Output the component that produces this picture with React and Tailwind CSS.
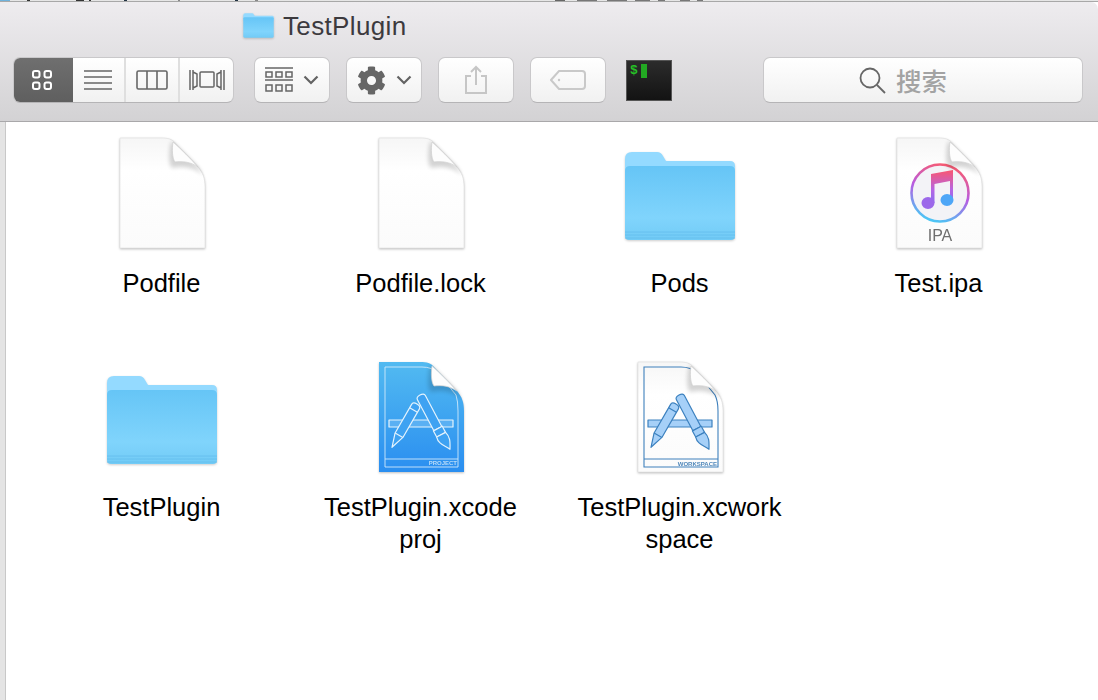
import React from "react";
import { FaCog } from "react-icons/fa";

const sans = "font-['Liberation_Sans',Arial,sans-serif]";
const cjk = "font-['Noto_Sans_CJK_SC','Noto_Sans',sans-serif]";

const PAGE = "M7 3 H48 C55 3 59 4 62 8 L85 32 C90 38 92 43 92 52 V113 H7 Z";
const FOLD = "M60 7 C59 14 59 23 62 27 C70 26 78 27 85 32 C78 24 68 14 60 7 Z";

function PageFold() {
  return (
    <>
      <path d="M58 7 C56 16 55 29 59 33 C70 31 80 32 90 40 L85 32 L60 7 Z" fill="#000" opacity="0.16" className="blur-[2px]" />
      <path d={FOLD} fill="#fdfdfd" stroke="#cfcfcf" strokeWidth="0.7" />
    </>
  );
}

function DocIcon({ children }) {
  return (
    <svg width="100" height="120" viewBox="-1 0 100 120" className="drop-shadow-[0_1px_1px_rgba(0,0,0,0.25)]">
      <defs>
        <linearGradient id="paper" x1="0" y1="0" x2="0" y2="1">
          <stop offset="0" stopColor="#f6f6f6" />
          <stop offset="0.3" stopColor="#ffffff" />
          <stop offset="1" stopColor="#fbfbfb" />
        </linearGradient>
      </defs>
      <path d={PAGE} fill="url(#paper)" stroke="#dedede" strokeWidth="0.6" />
      {children}
      <PageFold />
    </svg>
  );
}

function FolderIcon({ small }) {
  return (
    <svg
      width={small ? 31 : 120}
      height={small ? 25 : 100}
      viewBox={small ? "5 4 112 90" : "1 -2 120 100"}
      className="drop-shadow-[0_1px_1px_rgba(0,0,0,0.2)]"
    >
      <defs>
        <linearGradient id="folderFront" x1="0" y1="0" x2="0" y2="1">
          <stop offset="0" stopColor="#66c5f6" />
          <stop offset="0.7" stopColor="#80d4fc" />
          <stop offset="1" stopColor="#72cbf6" />
        </linearGradient>
      </defs>
      <path d="M6 12 Q6 5 13 5 H38 Q42 5 44 9 L47 14 H111 Q116 14 116 19 V32 H6 Z" fill="#94daff" />
      <path d="M6 24 Q6 19 11 19 H111 Q116 19 116 24 V89 Q116 93 112 93 H10 Q6 93 6 89 Z" fill="url(#folderFront)" />
      {!small && <path d="M6 85 H116 M6 88 H116 M6 91 H116" stroke="#62bdec" strokeWidth="0.8" />}
    </svg>
  );
}

// the Xcode "A" made of a pencil, a brush and a ruler
function XcodeGlyph({ line, fill, barFill }) {
  return (
    <g stroke={line} strokeWidth="1.2" strokeLinejoin="round">
      <rect x="17" y="61" width="64" height="7" fill={barFill} />
      <g transform="translate(45 45) rotate(30)" fill={fill}>
        <path d="M-4.5 3 Q-4.5 0 0 0 Q4.5 0 4.5 3 V36 L0 50 L-4.5 36 Z" />
        <path d="M-4.5 7 H4.5 M-4.5 36 H4.5" fill="none" />
      </g>
      <g transform="translate(48 36) rotate(-28)" fill={fill}>
        <path d="M-4.5 3 Q-4.5 0 0 0 Q4.5 0 4.5 3 V38 H-4.5 Z" />
        <rect x="-5" y="38" width="10" height="7" />
        <path d="M-5 45 C-7 52 -2 56 1 62 C5 55 7 51 5 45 Z" />
      </g>
    </g>
  );
}

function ItunesIcon() {
  return (
    <DocIcon>
      <defs>
        <linearGradient id="ring" x1="0.7" y1="0" x2="0.4" y2="1">
          <stop offset="0" stopColor="#fb5b6c" />
          <stop offset="0.5" stopColor="#b75ce2" />
          <stop offset="1" stopColor="#4cc6f5" />
        </linearGradient>
        <linearGradient id="note" x1="0" y1="0" x2="0" y2="1">
          <stop offset="0" stopColor="#fa5670" />
          <stop offset="0.6" stopColor="#b565e4" />
          <stop offset="1" stopColor="#8a6cf0" />
        </linearGradient>
      </defs>
      <circle cx="50" cy="58" r="28.5" fill="#f3f3f7" stroke="url(#ring)" strokeWidth="2.6" />
      <path
        d="M41 39 L63 35 V65 H60 V46 L44.5 49 V68 H41 Z"
        fill="url(#note)"
      />
      <ellipse cx="38" cy="68" rx="6.5" ry="6" fill="#9c68ea" />
      <ellipse cx="57" cy="65" rx="6.5" ry="6" fill="#4ea6f7" />
      <text x="50" y="106" textAnchor="middle" fontSize="16" fill="#6f6f6f" className={sans}>IPA</text>
    </DocIcon>
  );
}

function ProjectIcon() {
  return (
    <svg width="100" height="120" viewBox="-1 0 100 120" className="drop-shadow-[0_1px_1px_rgba(0,0,0,0.25)]">
      <defs>
        <linearGradient id="projectBg" x1="0" y1="0" x2="0" y2="1">
          <stop offset="0" stopColor="#52baf1" />
          <stop offset="1" stopColor="#2a8ef0" />
        </linearGradient>
      </defs>
      <path d={PAGE} fill="url(#projectBg)" />
      <path d="M13 8 H50 Q60 8 66 14 L84 36 Q86 42 86 52 V108 H13 Z M13 100 H86" fill="none" stroke="#cfe9fb" strokeWidth="0.9" />
      <XcodeGlyph line="#e4f3fd" fill="#3ea2f2" barFill="#5ab0f3" />
      <text x="85" y="106" textAnchor="end" fontSize="6" fontWeight="700" fill="#b9dcf8" className={sans}>PROJECT</text>
      <PageFold />
    </svg>
  );
}

function WorkspaceIcon() {
  return (
    <DocIcon>
      <path d="M13 8 H50 Q60 8 66 14 L84 36 Q87 42 87 52 V108 H13 Z M13 100 H87" fill="none" stroke="#3f80bc" strokeWidth="1.1" />
      <XcodeGlyph line="#3c81bf" fill="#a6d0f8" barFill="#a6d0f8" />
      <text x="86" y="106.5" textAnchor="end" fontSize="6" fontWeight="700" fill="#4f87ba" className={sans}>WORKSPACE</text>
    </DocIcon>
  );
}

const files = [
  { name: "Podfile", icon: <DocIcon /> },
  { name: "Podfile.lock", icon: <DocIcon /> },
  { name: "Pods", icon: <FolderIcon /> },
  { name: "Test.ipa", icon: <ItunesIcon /> },
  { name: "TestPlugin", icon: <FolderIcon /> },
  { name: "TestPlugin.xcode", more: "proj", icon: <ProjectIcon /> },
  { name: "TestPlugin.xcwork", more: "space", icon: <WorkspaceIcon /> },
];

function ToolButton({ className = "", children }) {
  return (
    <div className={`flex h-[46px] items-center justify-center rounded-[7px] border border-[#c9c8ca] border-b-[#b5b4b6] bg-gradient-to-b from-white to-[#f1f1f1] ${className}`}>
      {children}
    </div>
  );
}

function Chevron() {
  return (
    <svg width="16" height="10" viewBox="0 0 16 10" fill="none" stroke="#636363" strokeWidth="2.2">
      <path d="M1.5 1.5 L8 8 L14.5 1.5" />
    </svg>
  );
}

function ViewSwitcher() {
  return (
    <div className="flex h-[46px] w-[221px] overflow-hidden rounded-[7px] border border-[#c9c8ca] border-b-[#b5b4b6] bg-gradient-to-b from-white to-[#f1f1f1]">
      <div className="-ml-px flex w-[60px] items-center justify-center bg-gradient-to-b from-[#6f6f6f] to-[#5f5f5f] pr-[2px]">
        <svg width="22" height="22" viewBox="0 0 22 22" fill="none" stroke="#fff" strokeWidth="2">
          <rect x="2" y="2" width="6.5" height="6.5" rx="2" />
          <rect x="13.5" y="2" width="6.5" height="6.5" rx="2" />
          <rect x="2" y="13.5" width="6.5" height="6.5" rx="2" />
          <rect x="13.5" y="13.5" width="6.5" height="6.5" rx="2" />
        </svg>
      </div>
      <div className="flex w-[53px] items-center justify-center border-r-2 border-[#dfdfdf] pr-[2px]">
        <svg width="28" height="20" viewBox="0 0 28 20" stroke="#666" strokeWidth="1.6">
          <path d="M0 1 H28 M0 7 H28 M0 13 H28 M0 19 H28" />
        </svg>
      </div>
      <div className="flex w-[54px] items-center justify-center border-r-2 border-[#dfdfdf] pr-[1px]">
        <svg width="32" height="20" viewBox="0 0 32 20" fill="none" stroke="#666" strokeWidth="1.6">
          <rect x="1" y="1" width="30" height="18" rx="1.5" />
          <path d="M11 1 V19 M21 1 V19" />
        </svg>
      </div>
      <div className="flex flex-1 items-center justify-center pl-[1px]">
        <svg width="36" height="22" viewBox="0 0 36 22" fill="none" stroke="#666" strokeWidth="1.5">
          <rect x="11" y="3" width="14" height="15" rx="1" />
          <path d="M1 1 V21 M4 1 V21 M35 1 V21 M32 1 V21 M4 3 L8 5 V17 L4 19 M32 3 L28 5 V17 L32 19" />
        </svg>
      </div>
    </div>
  );
}

function Toolbar() {
  return (
    <div className="h-[120px] rounded-tr-[7px] border-b border-[#a9a8aa] bg-gradient-to-b from-[#eeecef] to-[#d3d2d4]">
      <div className="flex h-[47px] items-center gap-[9px] pl-[243px]">
        <FolderIcon small />
        <span className={`text-[26px] leading-none tracking-[0.35px] text-[#3c3a3e] ${sans}`}>TestPlugin</span>
      </div>
      <div className="mt-[8px] flex items-center pl-[13px] pr-[15px]">
        <ViewSwitcher />
        <ToolButton className="ml-[20px] w-[76px] gap-[10px]">
          <svg width="28" height="26" viewBox="0 0 28 26" fill="none" stroke="#666" strokeWidth="1.5">
            <path d="M0 1 H28 M0 13 H28" />
            <rect x="1" y="5" width="6" height="5" />
            <rect x="11" y="5" width="6" height="5" />
            <rect x="21" y="5" width="6" height="5" />
            <rect x="1" y="18" width="6" height="6" />
            <rect x="11" y="18" width="6" height="6" />
            <rect x="21" y="18" width="6" height="6" />
          </svg>
          <Chevron />
        </ToolButton>
        <ToolButton className="ml-[16px] w-[76px] gap-[10px]">
          <FaCog size={29} color="#666" />
          <Chevron />
        </ToolButton>
        <ToolButton className="ml-[16px] w-[76px]">
          <svg width="24" height="30" viewBox="0 0 24 30" fill="none" stroke="#c6c6c6" strokeWidth="2">
            <path d="M7 11 H2 V28 H22 V11 H17 M12 20 V2 M7 7 L12 2 L17 7" />
          </svg>
        </ToolButton>
        <ToolButton className="ml-[16px] w-[76px]">
          <svg width="36" height="20" viewBox="0 0 36 20" fill="none" stroke="#c9c9c9" strokeWidth="2">
            <path d="M9 1 H32 Q35 1 35 4 V16 Q35 19 32 19 H9 L1 10 Z" />
            <circle cx="9" cy="10" r="1.2" fill="#c9c9c9" stroke="none" />
          </svg>
        </ToolButton>
        <div className="ml-[20px] h-[41px] w-[46px] border border-[#555] bg-gradient-to-b from-[#2c2c2c] to-[#131313] pl-[3px] pt-[3px]">
          <div className="flex items-start gap-[3px]">
            <span className="text-[13px] font-bold leading-[14px] text-[#26c026] font-['Liberation_Mono',monospace]">$</span>
            <span className="h-[14px] w-[6px] bg-[#22a822]" />
          </div>
        </div>
        <ToolButton className="ml-auto w-[320px] gap-[10px] pr-[40px]">
          <svg width="27" height="27" viewBox="0 0 27 27" fill="none" stroke="#666" strokeWidth="1.8">
            <circle cx="11" cy="11" r="9.5" />
            <path d="M18 18 L26 26" />
          </svg>
          <span className={`text-[25.5px] font-medium leading-none text-[#a3a3a3] ${cjk}`}>搜索</span>
        </ToolButton>
      </div>
    </div>
  );
}

// slice of the desktop behind the window, only the bottom edge of its text shows
function BackdropStrip() {
  return (
    <div className="flex h-[2px] items-start border-b border-[#a8a8a8] bg-[#e6e6e6]">
      <span className="h-px w-[10px] bg-[#6fb2dc]" />
      <span className="ml-[17px] h-px w-[3px] bg-[#333]" />
      <span className="ml-[46px] h-px w-[8px] bg-[#333]" />
      <span className="ml-[5px] h-px w-[2px] bg-[#333]" />
      <span className="ml-[33px] h-px w-[3px] bg-[#234]" />
      <span className="ml-[51px] h-px w-[2px] bg-[#888]" />
      <span className="ml-[55px] h-px w-[3px] bg-[#234]" />
      <span className="ml-[17px] h-px w-[3px] bg-[#888]" />
      <span className="ml-[297px] h-px w-[10px] bg-[#666]" />
      <span className="ml-[12px] h-px w-[20px] bg-[#777]" />
      <span className="ml-[10px] h-px w-[20px] bg-[#777]" />
      <span className="ml-[8px] h-px w-[15px] bg-[#777]" />
      <span className="ml-[8px] h-px w-[7px] bg-[#777]" />
      <span className="ml-[15px] h-px w-[10px] bg-[#777]" />
      <span className="ml-[7px] h-px w-[6px] bg-[#777]" />
    </div>
  );
}

export default function App() {
  return (
    <div className={`h-[700px] w-[1098px] overflow-hidden bg-white ${sans}`}>
      <BackdropStrip />
      <Toolbar />
      <div className="flex h-[578px]">
        <div className="w-[6px] shrink-0 border-r border-[#c8c8c8] bg-[#e4e4e4]" />
        <div className="grid flex-1 auto-rows-[224px] grid-cols-[repeat(4,259px)] pl-[26px] pt-[13px]">
          {files.map((file) => (
            <div key={file.name} className="flex flex-col items-center">
              <div className="flex h-[120px] items-center">{file.icon}</div>
              <div className="mt-[12px] text-center text-[25.5px] leading-[32px] text-black">
                {file.name}
                {file.more && <br />}
                {file.more}
              </div>
            </div>
          ))}
        </div>
      </div>
    </div>
  );
}
